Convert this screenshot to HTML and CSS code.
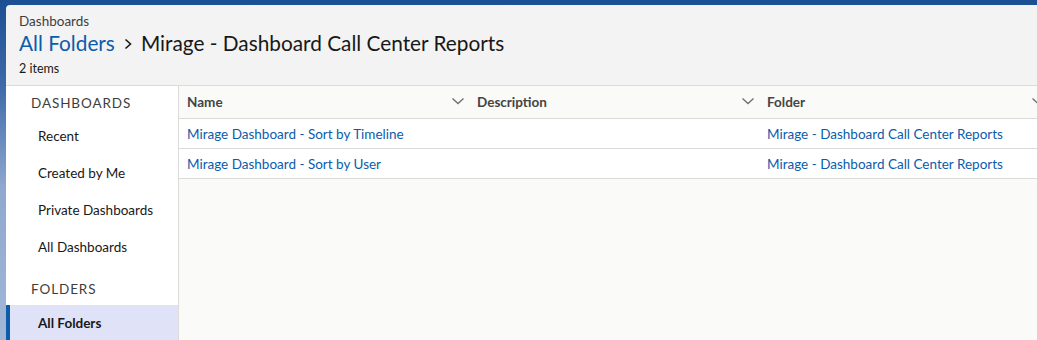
FILE: index.html
```html
<!DOCTYPE html>
<html lang="en">
<head>
    <meta charset="UTF-8">
    <meta name="viewport" content="width=device-width, initial-scale=1.0">
    <title>Dashboards - All Folders</title>
    <link rel="stylesheet" href="styles.css">
</head>
<body>

    <div class="card">
        <div class="header">
            <div class="object-name">Dashboards</div>
            <h1 class="title">
                <a href="#" class="crumb">All Folders</a>
                <svg class="crumb-sep" width="14" height="14" viewBox="0 0 14 14"><path d="M4.5 2.5 L9.5 7 L4.5 11.5" fill="none" stroke="#181818" stroke-width="1.6"/></svg>
                <span>Mirage - Dashboard Call Center Reports</span>
            </h1>
            <div class="count">2 items</div>
        </div>

        <div class="main">
            <nav class="sidebar">
                <div class="section-title">Dashboards</div>
                <a href="#" class="nav-item">Recent</a>
                <a href="#" class="nav-item">Created by Me</a>
                <a href="#" class="nav-item">Private Dashboards</a>
                <a href="#" class="nav-item">All Dashboards</a>
                <div class="section-title folders">Folders</div>
                <a href="#" class="nav-item active">All Folders</a>
            </nav>

            <div class="content">
                <table>
                    <thead>
                        <tr>
                            <th><span>Name</span><svg class="chev" width="14" height="14" viewBox="0 0 14 14"><path d="M1.5 4.5 L7 9.5 L12.5 4.5" fill="none" stroke="#706e6b" stroke-width="1.3"/></svg></th>
                            <th><span>Description</span><svg class="chev" width="14" height="14" viewBox="0 0 14 14"><path d="M1.5 4.5 L7 9.5 L12.5 4.5" fill="none" stroke="#706e6b" stroke-width="1.3"/></svg></th>
                            <th><span>Folder</span><svg class="chev" width="14" height="14" viewBox="0 0 14 14"><path d="M1.5 4.5 L7 9.5 L12.5 4.5" fill="none" stroke="#706e6b" stroke-width="1.3"/></svg></th>
                        </tr>
                    </thead>
                    <tbody>
                        <tr>
                            <td><a href="#">Mirage Dashboard - Sort by Timeline</a></td>
                            <td></td>
                            <td><a href="#">Mirage - Dashboard Call Center Reports</a></td>
                        </tr>
                        <tr>
                            <td><a href="#">Mirage Dashboard - Sort by User</a></td>
                            <td></td>
                            <td><a href="#">Mirage - Dashboard Call Center Reports</a></td>
                        </tr>
                    </tbody>
                </table>
            </div>
        </div>
    </div>

</body>
</html>
```

FILE: styles.css
```css
body {
    margin: 0;
    padding: 5px 0 0 6px;
    height: 340px;
    box-sizing: border-box;
    overflow: hidden;
    font-family: 'Lato', 'Open Sans', sans-serif;
    color: #181818;
    background: linear-gradient(180deg, #1b4f93 0%, #3d6aa8 25%, #8ea8cf 55%, #a3b7d7 100%);
}

.card {
    height: 100%;
    background: #f3f3f3;
    border-radius: 4px 0 0 0;
    display: flex;
    flex-direction: column;
}

.header {
    height: 81px;
    flex: none;
    box-sizing: border-box;
    padding: 8px 13px 0;
    border-bottom: 1px solid #dddbda;
}

.object-name {
    font-size: 13.5px;
    color: #3e3e3c;
    line-height: 16px;
}

.title {
    margin: 1px 0 0;
    font-size: 20.8px;
    font-weight: normal;
    line-height: 26px;
    display: flex;
    align-items: center;
    gap: 6px;
}

.crumb {
    color: #0b5cab;
    text-decoration: none;
}

.crumb-sep {
    margin-top: 1px;
}

.count {
    margin-top: 5px;
    font-size: 12.5px;
    color: #181818;
}

.main {
    flex: 1;
    display: flex;
    background: #fff;
}

.sidebar {
    width: 172px;
    flex: none;
    border-right: 1px solid #dddbda;
    display: flex;
    flex-direction: column;
}

.section-title {
    padding: 9px 0 0 25px;
    height: 32px;
    box-sizing: border-box;
    font-size: 13.5px;
    text-transform: uppercase;
    letter-spacing: 0.9px;
    color: #3e3e3c;
}

.section-title.folders {
    margin-top: 6px;
}

.nav-item {
    height: 37px;
    line-height: 37px;
    padding-left: 32px;
    font-size: 13.5px;
    color: #181818;
    text-decoration: none;
}

.nav-item.active {
    margin-top: 1px;
    background: #e0e3f7;
    border-left: 4px solid #0b5cab;
    padding-left: 28px;
    font-weight: bold;
}

.content {
    flex: 1;
    background: #fafaf9;
    overflow: hidden;
}

table {
    width: 870px;
    border-collapse: collapse;
    table-layout: fixed;
}

th {
    height: 32px;
    padding: 0 8px;
    text-align: left;
    font-size: 13.5px;
    font-weight: bold;
    color: #444;
    background: #fafaf9;
    border-bottom: 1px solid #dddbda;
}

th span {
    float: left;
}

th .chev {
    float: right;
    margin-right: -4px;
}

td {
    height: 29px;
    padding: 0 8px;
    font-size: 13.5px;
    background: #fff;
    border-bottom: 1px solid #dddbda;
    white-space: nowrap;
}

td a {
    color: #0b5cab;
    text-decoration: none;
}
```
